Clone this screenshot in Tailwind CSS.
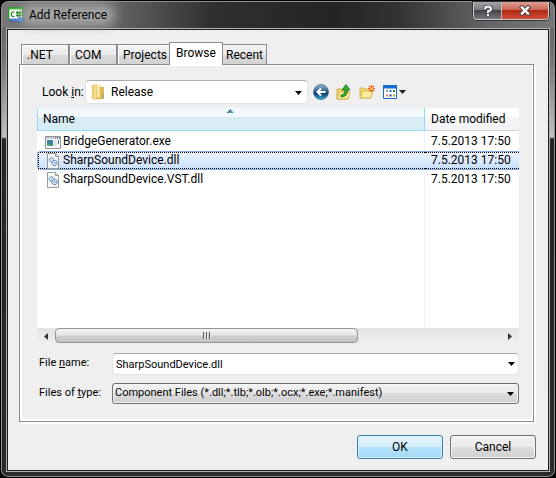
<!DOCTYPE html>
<html lang="en">
<head>
<meta charset="utf-8">
<title>Add Reference</title>
<script src="https://cdn.jsdelivr.net/npm/@tailwindcss/browser@4"></script>
</head>
<body class="bg-black font-[Roboto,sans-serif] text-xs text-black">
<div class="flex h-screen flex-col rounded-lg border border-black bg-[linear-gradient(180deg,#5c5a5a_0px,#77757a_60px,#c4c0c0_136px,#262424_138px,#2b2b2b_100%)] px-[5px] pb-[5px] shadow-[inset_0_0_0_1px_#8d8d8d]">
  <header class="-mx-[4px] mt-px flex h-[26px] shrink-0 items-start rounded-t-md bg-[linear-gradient(90deg,#777_0%,#6c6c6c_18%,#303030_38%,#242424_60%,#333_72%,#666_88%,#777_100%)] pl-[6px]">
    <svg class="mt-[5px] h-4 w-4 shrink-0" viewBox="0 0 16 16" aria-hidden="true">
      <path d="M.7.700h14v12H.7z" fill="#fff" stroke="#2c9a2c" stroke-width="1.400"/>
      <path d="M1 1h13v1.500H1z" fill="#42b942"/>
      <path d="M6.500 5H4.500L3.500 6v2.500l1 1h2M9.500 4v6M12 4v6M8 5.700h5.500M8 8.300h5.500" fill="none" stroke="#128a12" stroke-width="1.200"/>
      <path d="M2 12h9V9.800l5 3.200-5 3v-2H2z" fill="#5b98f0" stroke="#174fae" stroke-width=".7"/>
    </svg>
    <h1 class="relative ml-[5px] mt-[4px] text-xs leading-[18px]">
      <span class="absolute -inset-x-2 -inset-y-px rounded-full bg-[#a8a8a8] blur-[6px]"></span>
      <span class="relative">Add Reference</span>
    </h1>
    <div class="mr-[5px] ml-auto flex h-[18px] overflow-hidden rounded-b border border-t-0 border-[#ccc] shadow-[0_0_0_1px_#333]">
      <button aria-label="Help" class="flex w-7 items-center justify-center border-r border-[#bbb] bg-[linear-gradient(#a4a4a8,#77777b_48%,#444448_50%,#77777b)]">
        <svg class="h-3 w-3" viewBox="0 0 12 12"><path d="M3 4Q3 1.500 6 1.500T9 4Q9 5.500 6 6.500V8M6 9v2" fill="none" stroke="#3a3f50" stroke-width="3.600"/><path d="M3 4Q3 1.500 6 1.500T9 4Q9 5.500 6 6.500V8M6 9v2" fill="none" stroke="#fff" stroke-width="2"/></svg>
      </button>
      <button aria-label="Close" class="flex w-[46px] items-center justify-center bg-[linear-gradient(#dda195,#c96251_48%,#b02a10_50%,#cb5038)]">
        <svg class="h-[11px] w-3" viewBox="0 0 12 11"><path d="M3 2.500l6 6M9 2.500l-6 6" stroke="#53444c" stroke-width="4.400" stroke-linecap="square"/><path d="M3 2.500l6 6M9 2.500l-6 6" stroke="#fff" stroke-width="2.400" stroke-linecap="square"/></svg>
      </button>
    </div>
  </header>

  <main class="flex min-h-0 flex-1 flex-col border border-[#b2b2b2]">
    <div class="flex min-h-0 flex-1 flex-col border border-[#1c1c1c] bg-[#efefef] px-3 pt-3">
      <nav role="tablist" class="relative z-10 -mb-px ml-[1px] flex items-end leading-[18px]">
        <button role="tab" class="h-[21px] w-12 border border-[#898c95] bg-[linear-gradient(#f3f3f3,#ebebeb_50%,#dcdcdc_51%,#d2d2d2)] pl-[5px] text-left shadow-[inset_1px_1px_0_#fff]">.NET</button>
        <button role="tab" class="h-[21px] w-12 border border-[#898c95] bg-[linear-gradient(#f3f3f3,#ebebeb_50%,#dcdcdc_51%,#d2d2d2)] pl-[5px] text-left shadow-[inset_1px_1px_0_#fff]">COM</button>
        <button role="tab" class="h-[21px] w-[52px] border border-r-0 border-[#898c95] bg-[linear-gradient(#f3f3f3,#ebebeb_50%,#dcdcdc_51%,#d2d2d2)] pl-[5px] text-left shadow-[inset_1px_1px_0_#fff]">Projects</button>
        <button role="tab" aria-selected="true" class="h-[23px] w-[54px] border border-b-0 border-[#898c95] bg-white pb-[2px] text-center">Browse</button>
        <button role="tab" class="h-[21px] w-11 border border-l-0 border-[#898c95] bg-[linear-gradient(#f3f3f3,#ebebeb_50%,#dcdcdc_51%,#d2d2d2)] text-center">Recent</button>
      </nav>

      <section class="mr-[2px] -ml-px flex min-h-0 flex-1 flex-col border border-[#898c95] shadow-[2px_2px_0_#fff]">
        <div class="flex min-h-0 flex-1 flex-col border-t border-r border-b-2 border-l-2 border-white pt-[14px] pr-[13px] pb-[15px] pl-[15px]">
          <div class="flex h-6 shrink-0 items-center pl-[5px]">
            <label for="look" class="w-[43px] whitespace-nowrap">Look <u>i</u>n:</label>
            <div class="relative w-[223px]">
              <select id="look" class="block h-6 w-full appearance-none rounded-sm border border-[#e2e3ea] border-t-[#abadb3] bg-white pl-[25px]"><option>Release</option></select>
              <svg class="pointer-events-none absolute top-1 left-[5px] h-4 w-4" viewBox="0 0 16 16"><path d="M2 1l5-1v14l-5 1z" fill="#e8cd68"/><path d="M7 2l4-1v13H7z" fill="#f6e6a3"/><path d="M10 3h4v12l-9 .5L2 15l8-2z" fill="#ddb94e"/><path d="M5 1v14" stroke="#fff2bb"/><path d="M13 10v4" stroke="#6b9ecb"/></svg>
              <svg class="pointer-events-none absolute top-[11px] right-[6px] h-1 w-[7px]" viewBox="0 0 7 4"><path d="M0 0h7L3.500 4z"/></svg>
            </div>
            <div class="ml-[5px] flex items-center gap-[7px]">
              <button aria-label="Back"><svg class="h-4 w-4" viewBox="0 0 16 16"><defs><linearGradient id="b" x2="0" y2="1"><stop stop-color="#9eb9d0"/><stop offset=".45" stop-color="#2e618e"/><stop offset=".6" stop-color="#123e6c"/><stop offset="1" stop-color="#35b5df"/></linearGradient></defs><circle cx="8" cy="8" r="7.500" fill="url(#b)" stroke="#436b8d" stroke-width=".8"/><path d="M12.500 8H5M8 4.500L4.500 8 8 11.500" fill="none" stroke="#fff" stroke-width="2"/></svg></button>
              <button aria-label="Up one level"><svg class="h-4 w-4" viewBox="0 0 16 16"><path d="M1 5h4l1 1h6v9H1z" fill="#f3da73" stroke="#c79c2f" stroke-width=".8"/><path d="M1 15l3-7h10l-2 7z" fill="#fdee9d" stroke="#cda53b" stroke-width=".8"/><path d="M5 11q4 0 4-5H6l4-5.500L14 6h-2.500q0 7-6.500 7z" fill="#35ab2c" stroke="#14701b" stroke-width=".8"/></svg></button>
              <button aria-label="New folder"><svg class="h-4 w-4" viewBox="0 0 16 16"><path d="M1 4h4l1 1h6v9H1z" fill="#f3da73" stroke="#cfa63c" stroke-width=".8"/><path d="M1 14l3-7h10l-2 7z" fill="#fdee9d" stroke="#d2ac45" stroke-width=".8"/><path d="M12.500 1v7M9 4.500h7M10 2l5 5M15 2l-5 5" stroke="#f05a24" stroke-width="1.200"/><circle cx="12.500" cy="4.500" r="1.300" fill="#ffe45b"/></svg></button>
              <button aria-label="Views" class="flex items-center gap-px"><svg class="h-4 w-4" viewBox="0 0 16 16"><path d="M1.500 1.500h13v13h-13z" fill="#fff" stroke="#146ed0"/><path d="M1 1h14v3.500H1z" fill="#146ed0"/><path d="M4 6h2v2H4z" fill="#999bc7"/><path d="M7.500 6h2v2h-2z" fill="#286fc2"/><path d="M11 6h2v2h-2z" fill="#20913b"/><path d="M4 10.500h2v2H4z" fill="#eb7452"/><path d="M7.500 10.500h2v2h-2z" fill="#173f9e"/><path d="M11 10.500h2v2h-2z" fill="#d9a51c"/></svg><svg class="h-1 w-[7px]" viewBox="0 0 7 4"><path d="M0 0h7L3.500 4z" fill="#222"/></svg></button>
            </div>
          </div>

          <div class="mt-1 flex min-h-0 flex-1 flex-col bg-[linear-gradient(#e9f3fd,#e9f3fd)] bg-[length:1px_100%] bg-[position:right_94px_top] bg-no-repeat [background-color:#fff]">
            <table class="w-full table-fixed border-separate border-spacing-0 text-left">
              <colgroup><col><col class="w-[94px]"></colgroup>
              <thead>
                <tr class="h-[23px]">
                  <th class="relative border-r border-b border-l border-[#96d9f9] bg-[linear-gradient(#f2f9fc_42%,#d8ecf6_43%)] p-0 pl-[5px] font-normal">Name<svg class="absolute top-px left-1/2 -ml-1 h-1 w-[7px]" viewBox="0 0 7 4"><path d="M0 4h7L3.500 0z" fill="#5f9dbd"/><path d="M0 4L3.500 0v1.500L1.500 4z" fill="#2f5575"/></svg></th>
                  <th class="border-b border-[#d5d5d5] bg-[linear-gradient(#fff_42%,#f3f4f6_43%)] p-0 pl-[6px] font-normal whitespace-nowrap">Date modified</th>
                </tr>
                <tr class="h-px"><td colspan="2" class="p-0"></td></tr>
              </thead>
              <tbody class="leading-[17px]">
                <tr class="h-[19px]">
                  <td class="p-0 pl-2"><div class="flex items-center gap-[2px]"><svg class="h-4 w-4" viewBox="0 0 16 16"><path d="M.5 2.500h15v12H.5z" fill="#fff" stroke="#8b9299"/><path d="M1 3h14v2H1z" fill="#c6ccd2"/><path d="M10 4h1M12 4h1M14 4h1" stroke="#555"/><path d="M2 6h6v6H2z" fill="#39869a"/><path d="M2 9l6 3H2z" fill="#4aab69"/><path d="M9 7h3M9 9h3M9 11h3" stroke="#b7c6d5"/><path d="M13.500 6v4" stroke="#367aab"/></svg>BridgeGenerator.exe</div></td>
                  <td class="p-0 pl-[6px] whitespace-nowrap">7.5.2013 17:50</td>
                </tr>
                <tr class="h-[19px]" aria-selected="true">
                  <td class="rounded-l-sm border border-r-0 border-[#84acdd] bg-[linear-gradient(#edf4fd,#c9dffb)] bg-origin-border p-0"><div class="flex h-[17px] items-center gap-[2px] border border-r-0 border-dotted border-black pl-[6px]"><svg class="h-4 w-4" viewBox="0 0 16 16"><path d="M2.500.5h8l3 3v12h-11z" fill="#f6f8fa" stroke="#999"/><path d="M10.500.5v3h3" fill="#ddd" stroke="#999"/><g fill="#d9e9fa" stroke="#3d6799"><circle cx="6.500" cy="7" r="2.200" stroke-dasharray="1.500 .5"/><circle cx="9.500" cy="10" r="2.700" stroke-dasharray="1.500 .5"/></g><circle cx="9.500" cy="10" r=".8" fill="#3d6799"/></svg>SharpSoundDevice.dll</div></td>
                  <td class="border-y border-[#84acdd] bg-[linear-gradient(#edf4fd,#c9dffb)] p-0 whitespace-nowrap"><div class="flex h-[17px] items-center border-y border-dotted border-black pl-[6px]">7.5.2013 17:50</div></td>
                </tr>
                <tr class="h-[19px]">
                  <td class="p-0 pl-2"><div class="flex items-center gap-[2px]"><svg class="h-4 w-4" viewBox="0 0 16 16"><path d="M2.500.5h8l3 3v12h-11z" fill="#f6f8fa" stroke="#999"/><path d="M10.500.5v3h3" fill="#ddd" stroke="#999"/><g fill="#d9e9fa" stroke="#3d6799"><circle cx="6.500" cy="7" r="2.200" stroke-dasharray="1.500 .5"/><circle cx="9.500" cy="10" r="2.700" stroke-dasharray="1.500 .5"/></g><circle cx="9.500" cy="10" r=".8" fill="#3d6799"/></svg>SharpSoundDevice.VST.dll</div></td>
                  <td class="p-0 pl-[6px] whitespace-nowrap">7.5.2013 17:50</td>
                </tr>
              </tbody>
            </table>
            <div class="mt-auto flex h-4 items-stretch bg-[linear-gradient(#e4e4e4,#eee)]">
              <button aria-label="Scroll left" class="flex w-[18px] items-center justify-center"><svg class="h-[7px] w-1" viewBox="0 0 4 7"><path d="M4 0v7L0 3.500z" fill="#333"/></svg></button>
              <div class="flex-1"><div class="flex h-[15px] w-[68%] items-center justify-center rounded-sm border border-[#959595] bg-[linear-gradient(#f4f4f4,#e5e5e5_48%,#cfcfcf_52%,#c3c3c3)]"><svg class="h-[7px] w-2" viewBox="0 0 8 7"><path d="M.5 0v7M3.500 0v7M6.500 0v7" stroke="#555"/><path d="M1.500 0v7M4.500 0v7M7.500 0v7" stroke="#eee"/></svg></div></div>
              <button aria-label="Scroll right" class="flex w-[18px] items-center justify-center"><svg class="h-[7px] w-1" viewBox="0 0 4 7"><path d="M0 0v7l4-3.500z" fill="#333"/></svg></button>
            </div>
          </div>

          <div class="mt-[9px] grid shrink-0 grid-cols-[73px_1fr] gap-x-[2px] gap-y-2 text-[11px]">
            <label for="file" class="pt-[2px] pl-[2px] leading-4">File <u>n</u>ame:</label>
            <div class="relative">
              <input id="file" value="SharpSoundDevice.dll" class="block h-[22px] w-full rounded-sm border border-[#dde3ec] border-t-[#abadb3] bg-white pt-px pl-[3px]">
              <button aria-label="Recent names" class="absolute top-[5px] right-0 flex h-3 w-4 items-center justify-center"><svg class="h-1 w-[7px]" viewBox="0 0 7 4"><path d="M0 0h7L3.500 4z"/></svg></button>
            </div>
            <label for="type" class="pt-[2px] pl-[2px] leading-4">Files of <u>t</u>ype:</label>
            <div class="relative">
              <select id="type" class="block h-[21px] w-full appearance-none rounded-[3px] border border-[#707070] bg-[linear-gradient(#f2f2f2,#ebebeb_49%,#dddddd_50%,#cfcfcf)] pl-[2px] shadow-[inset_0_0_0_1px_#f6f6f6]"><option>Component Files (*.dll;*.tlb;*.olb;*.ocx;*.exe;*.manifest)</option></select>
              <svg class="pointer-events-none absolute top-[9px] right-[5px] h-1 w-[7px]" viewBox="0 0 7 4"><path d="M0 0h7L3.500 4z"/></svg>
            </div>
          </div>
        </div>
      </section>

      <footer class="flex h-12 shrink-0 items-start justify-end gap-[7px] pt-[13px]">
        <button class="h-6 w-[86px] rounded-[3px] border border-[#3c7fb1] bg-[linear-gradient(#e4f4fc,#d5effc_48%,#b6e3fb_50%,#a3d9f7)] shadow-[inset_0_0_0_1px_#d5f1fc]">OK</button>
        <button class="h-6 w-[86px] rounded-[3px] border border-[#707070] bg-[linear-gradient(#f2f2f2,#ebebeb_48%,#ddd_50%,#cfcfcf)] shadow-[inset_0_0_0_1px_#f8f8f8]">Cancel</button>
      </footer>
    </div>
  </main>
</div>
</body>
</html>
